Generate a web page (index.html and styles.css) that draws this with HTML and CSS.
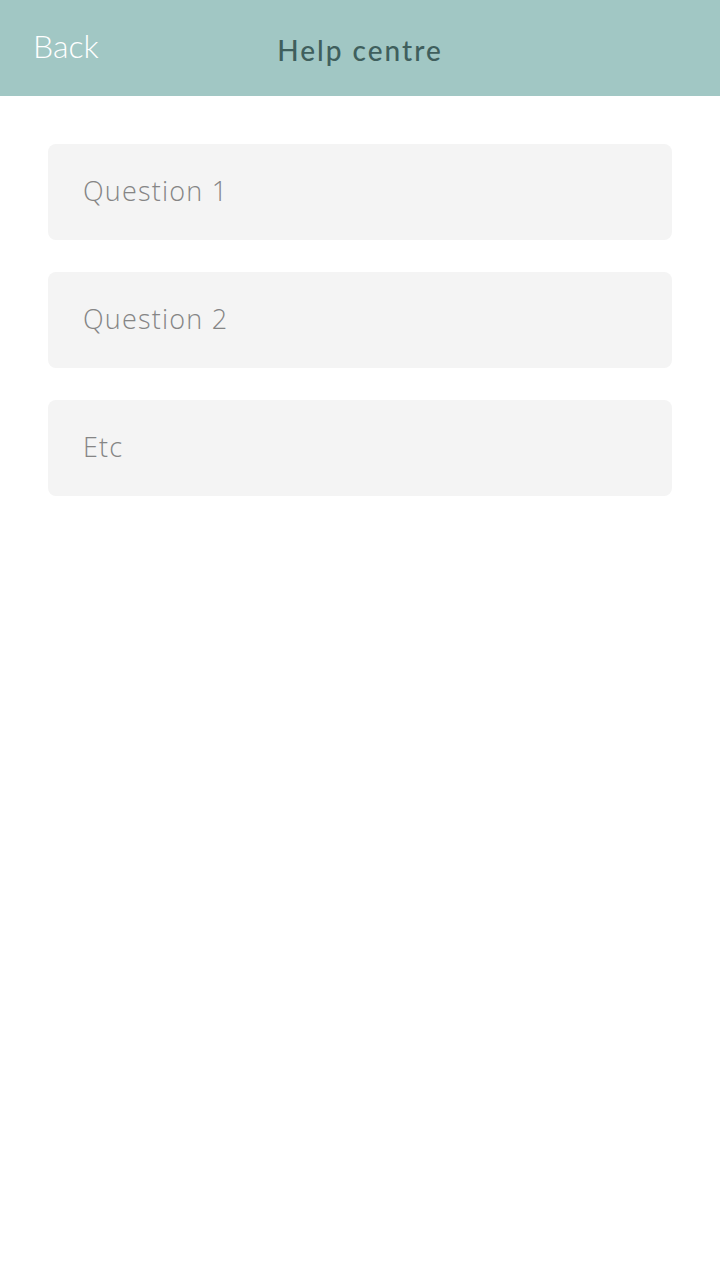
FILE: index.html
```html
<!DOCTYPE html>
<html>
<head>
<meta charset="utf-8">
<link rel="stylesheet" href="styles.css">
</head>
<body>
<header class="topbar">
  <span class="back">Back</span>
  <h1 class="title">Help centre</h1>
</header>
<main class="list">
  <div class="item">Question 1</div>
  <div class="item">Question 2</div>
  <div class="item">Etc</div>
</main>
</body>
</html>
```
FILE: styles.css
```css
* { box-sizing: border-box; }
html, body { margin: 0; padding: 0; background: #ffffff; }
body { width: 720px; height: 1280px; font-family: "Lato", "Open Sans", sans-serif; }
.topbar {
  position: relative;
  height: 96px;
  background: #a1c7c4;
  display: flex;
  align-items: center;
  justify-content: center;
}
.back {
  position: absolute;
  left: 33px;
  top: 26px;
  font-size: 32px;
  font-weight: 300;
  color: #ffffff;
}
.title {
  margin: 0;
  margin-top: 4px;
  font-size: 28px;
  font-weight: 500;
  letter-spacing: 2px;
  color: #3f5f5d;
}
.list {
  padding: 48px 48px;
  display: flex;
  flex-direction: column;
  gap: 32px;
}
.item {
  height: 96px;
  background: #f4f4f4;
  border-radius: 8px;
  padding-left: 35px;
  padding-bottom: 4px;
  display: flex;
  align-items: center;
  font-family: "Open Sans", sans-serif;
  font-size: 27px;
  font-weight: 300;
  letter-spacing: 1.2px;
  color: #858585;
}
```
